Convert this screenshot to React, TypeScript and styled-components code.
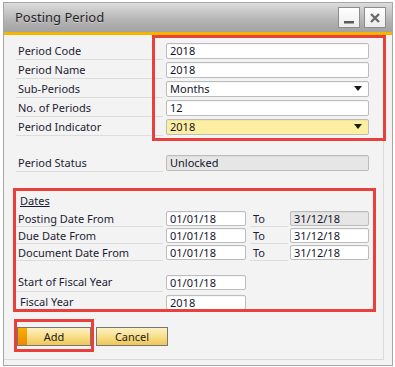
import React from "react";
import styled, { createGlobalStyle } from "styled-components";

const Global = createGlobalStyle`
  html, body { margin: 0; padding: 0; background: #ffffff; }
  body { font-family: "Noto Sans", "DejaVu Sans", sans-serif; }
  * { box-sizing: border-box; }
`;

const Page = styled.div`
  padding: 2px 0 0 3px;
  width: 395px;
  height: 367px;
`;

const Window = styled.div`
  position: relative;
  width: 390px;
  height: 364px;
  border: 1px solid #a6a6a6;
  background: #f3f3f3;
  display: flex;
  flex-direction: column;
`;

const TitleBar = styled.div`
  height: 32px;
  flex: none;
  display: flex;
  align-items: center;
  justify-content: space-between;
  padding: 0 6px 3px 11px;
  background: linear-gradient(#dcdcdc, #b4b4b4 60%, #a2a2a2);
  border-bottom: 3px solid #f4b400;
`;

const Title = styled.div`
  font-size: 13px;
  color: #2a1f2a;
  text-shadow: 0 1px 0 rgba(255, 255, 255, 0.35);
  margin-top: 1px;
`;

const TitleButtons = styled.div`
  display: flex;
  gap: 4px;
  margin-top: 3px;
`;

const TitleButton = styled.div`
  width: 22px;
  height: 21px;
  border: 1px solid #8c8c8c;
  background: linear-gradient(#ffffff, #ececec);
  display: flex;
  align-items: center;
  justify-content: center;
`;

const Body = styled.div`
  flex: 1;
  padding: 0 8px 5px 0;
  display: flex;
`;

const Panel = styled.div`
  flex: 1;
  border-right: 1px solid #dadada;
  border-bottom: 1px solid #dadada;
  padding: 6px 0 0 12px;
  display: flex;
  flex-direction: column;
`;

const Row = styled.div<{ $h: number; $mt?: number }>`
  display: flex;
  align-items: center;
  height: ${(p) => p.$h}px;
  margin-top: ${(p) => p.$mt ?? 0}px;
`;

const Label = styled.div<{ $w?: number; $pl?: number; $line?: boolean }>`
  width: ${(p) => p.$w ?? 147}px;
  height: 100%;
  display: flex;
  align-items: center;
  padding-left: ${(p) => p.$pl ?? 2}px;
  font-size: 11px;
  color: #1c1c34;
  white-space: nowrap;
  border-bottom: ${(p) => (p.$line === false ? "none" : "1px solid #dcdcdc")};
`;

const SectionTitle = styled.div`
  padding-left: 4px;
  font-size: 11px;
  color: #1c1c34;
  text-decoration: underline;
  line-height: 18px;
  height: 18px;
`;

const Field = styled.div<{ $w: number; $h: number; $bg?: string; $ml?: number }>`
  width: ${(p) => p.$w}px;
  height: ${(p) => p.$h}px;
  margin-left: ${(p) => p.$ml ?? 3}px;
  background: ${(p) => p.$bg ?? "#ffffff"};
  border: 1px solid #bcbcbc;
  border-radius: 2px;
  display: flex;
  align-items: center;
  justify-content: space-between;
  padding: 0 6px 0 3px;
  font-size: 11px;
  color: #14142a;
  box-shadow: inset 0 1px 0 rgba(0, 0, 0, 0.04);
`;

const Arrow = styled.span`
  width: 0;
  height: 0;
  border-left: 4px solid transparent;
  border-right: 4px solid transparent;
  border-top: 5px solid #1a1a1a;
`;

const ButtonRow = styled.div`
  display: flex;
  gap: 5px;
  margin-top: 15px;
  padding-left: 1px;
`;

const Button = styled.div<{ $accent?: boolean }>`
  position: relative;
  width: ${(p) => (p.$accent ? 74 : 72)}px;
  height: 19px;
  border: 1px solid #767676;
  background: linear-gradient(#fdf1c4, #f8df8a 50%, #f0c656);
  display: flex;
  align-items: center;
  justify-content: center;
  font-size: 11px;
  color: #1c1c1c;
  overflow: hidden;
`;

const Accent = styled.span`
  position: absolute;
  left: 0;
  top: 0;
  bottom: 0;
  width: 9px;
  background: linear-gradient(#f8b000, #ea8a00);
`;

const Highlight = styled.div<{ $l: number; $t: number; $w: number; $h: number }>`
  position: absolute;
  left: ${(p) => p.$l}px;
  top: ${(p) => p.$t}px;
  width: ${(p) => p.$w}px;
  height: ${(p) => p.$h}px;
  border: 3px solid #e8403c;
  pointer-events: none;
`;

const topRows: { label: string; value: string; select?: boolean; bg?: string }[] = [
  { label: "Period Code", value: "2018" },
  { label: "Period Name", value: "2018" },
  { label: "Sub-Periods", value: "Months", select: true },
  { label: "No. of Periods", value: "12" },
  { label: "Period Indicator", value: "2018", select: true, bg: "#fcefa2" },
];

const dateRows: { label: string; from: string; to: string; toBg?: string }[] = [
  { label: "Posting Date From", from: "01/01/18", to: "31/12/18", toBg: "#e6e6e6" },
  { label: "Due Date From", from: "01/01/18", to: "31/12/18" },
  { label: "Document Date From", from: "01/01/18", to: "31/12/18" },
];

export default function App() {
  return (
    <>
      <Global />
      <Page>
        <Window>
          <TitleBar>
            <Title>Posting Period</Title>
            <TitleButtons>
              <TitleButton>
                <svg width="14" height="14" viewBox="0 0 14 14">
                  <rect x="2" y="10" width="10" height="2.5" fill="#5a5a5a" />
                </svg>
              </TitleButton>
              <TitleButton>
                <svg width="14" height="14" viewBox="0 0 14 14">
                  <path d="M3 3 L11 11 M11 3 L3 11" stroke="#6a6a6a" strokeWidth="2.4" />
                </svg>
              </TitleButton>
            </TitleButtons>
          </TitleBar>
          <Body>
            <Panel>
              {topRows.map((r) => (
                <Row key={r.label} $h={19}>
                  <Label>{r.label}</Label>
                  <Field $w={203} $h={16} $bg={r.bg}>
                    <span>{r.value}</span>
                    {r.select && <Arrow />}
                  </Field>
                </Row>
              ))}
              <Row $h={19} $mt={17}>
                <Label>Period Status</Label>
                <Field $w={203} $h={16} $bg="#e6e6e6">
                  <span>Unlocked</span>
                </Field>
              </Row>
              <Row $h={18} $mt={20}>
                <SectionTitle>Dates</SectionTitle>
              </Row>
              {dateRows.map((r) => (
                <Row key={r.label} $h={17}>
                  <Label>{r.label}</Label>
                  <Field $w={80} $h={15}>
                    <span>{r.from}</span>
                  </Field>
                  <Label $w={38} $pl={3} style={{ marginLeft: 4 }}>
                    To
                  </Label>
                  <Field $w={79} $h={15} $ml={2} $bg={r.toBg}>
                    <span>{r.to}</span>
                  </Field>
                </Row>
              ))}
              <Row $h={20} $mt={11}>
                <Label>Start of Fiscal Year</Label>
                <Field $w={80} $h={15}>
                  <span>01/01/18</span>
                </Field>
              </Row>
              <Row $h={20}>
                <Label $pl={4}>Fiscal Year</Label>
                <Field $w={80} $h={15}>
                  <span>2018</span>
                </Field>
              </Row>
              <ButtonRow>
                <Button $accent>
                  <Accent />
                  Add
                </Button>
                <Button>Cancel</Button>
              </ButtonRow>
            </Panel>
          </Body>
          <Highlight $l={148} $t={32} $w={234} $h={106} />
          <Highlight $l={9} $t={185} $w={363} $h={124} />
          <Highlight $l={10} $t={316} $w={80} $h={33} />
        </Window>
      </Page>
    </>
  );
}
